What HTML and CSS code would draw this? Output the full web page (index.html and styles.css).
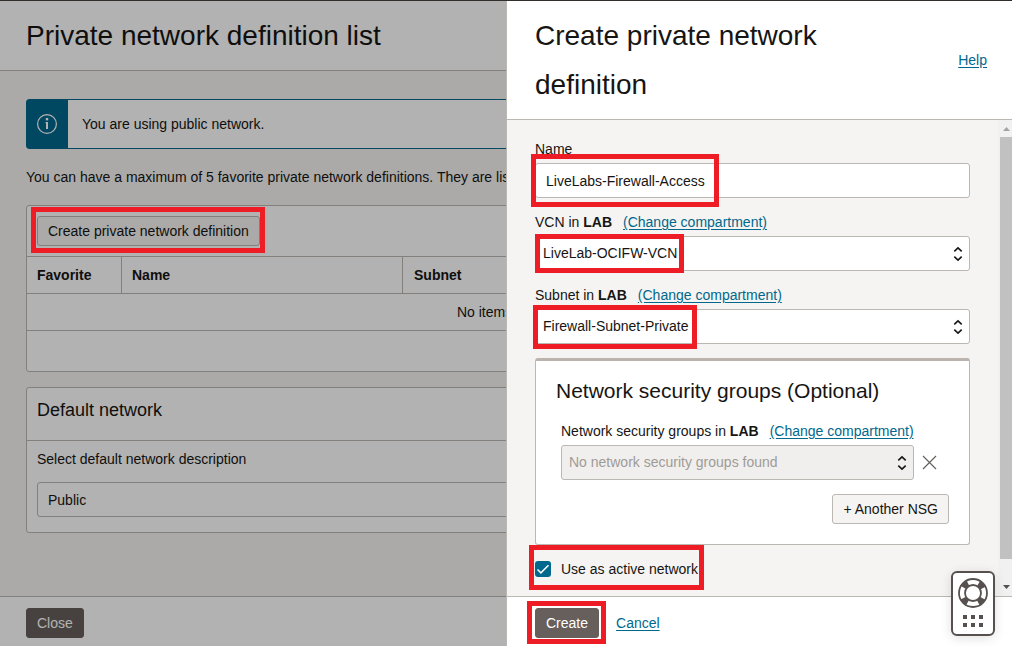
FILE: index.html
```html
<!DOCTYPE html>
<html lang="en">
<head>
<meta charset="utf-8">
<title>Private network definition list</title>
<link rel="stylesheet" href="styles.css">
</head>
<body>
<div class="app">
  <section class="pane page">
    <header class="pane-header"><h1 class="title">Private network definition list</h1></header>
    <main class="page-body">
      <div class="banner">
        <div class="banner-icon">
          <svg width="20" height="20" viewBox="0 0 20 20" fill="none" stroke="#fff"><circle cx="10" cy="10" r="9.4" stroke-width="1.200"/><path d="M10 8v7" stroke-width="2"/><path d="M10 4v2.400" stroke-width="2.400"/><path d="M8.500 8.500H10" stroke-width="1"/></svg>
        </div>
        <p class="banner-text">You are using public network.</p>
      </div>
      <p class="intro">You can have a maximum of 5 favorite private network definitions. They are listed below.</p>
      <section class="card definitions">
        <div class="toolbar">
          <span class="marked"><button class="btn" type="button">Create private network definition</button><span class="mark mark-definition"></span></span>
        </div>
        <table class="table">
          <thead><tr><th class="col-favorite">Favorite</th><th class="col-name">Name</th><th>Subnet</th></tr></thead>
          <tbody><tr><td colspan="3">No items found.</td></tr></tbody>
        </table>
        <div class="table-footer"></div>
      </section>
      <section class="card">
        <h2 class="card-title">Default network</h2>
        <div class="card-body">
          <label class="label" for="default-network">Select default network description</label>
          <input class="control" id="default-network" type="text" value="Public" readonly>
        </div>
      </section>
    </main>
    <footer class="pane-footer"><button class="btn btn-primary" type="button">Close</button></footer>
  </section>
  <div class="scrim"></div>

  <aside class="pane drawer">
    <header class="pane-header drawer-header">
      <h1 class="title">Create private network definition</h1>
      <a class="link" href="#help">Help</a>
    </header>
    <div class="drawer-main">
      <form class="form" id="create-form">
        <div class="field">
          <label class="label" for="name">Name</label>
          <div class="marked"><input class="control" id="name" type="text" value="LiveLabs-Firewall-Access"><span class="mark mark-name"></span></div>
        </div>
        <div class="field">
          <div class="label-row"><label class="label" for="vcn">VCN in <b>LAB</b></label><a class="link" href="#vcn">(Change compartment)</a></div>
          <div class="marked">
            <select class="control select" id="vcn"><option>LiveLab-OCIFW-VCN</option></select>
            <svg class="chevrons" width="10" height="16" viewBox="0 0 10 16"><path d="M1.300 5.300 5 1.800l3.700 3.500M1.300 10.700 5 14.200l3.700-3.500"/></svg>
            <span class="mark mark-vcn"></span>
          </div>
        </div>
        <div class="field">
          <div class="label-row"><label class="label" for="subnet">Subnet in <b>LAB</b></label><a class="link" href="#subnet">(Change compartment)</a></div>
          <div class="marked">
            <select class="control select" id="subnet"><option>Firewall-Subnet-Private</option></select>
            <svg class="chevrons" width="10" height="16" viewBox="0 0 10 16"><path d="M1.300 5.300 5 1.800l3.700 3.500M1.300 10.700 5 14.200l3.700-3.500"/></svg>
            <span class="mark mark-subnet"></span>
          </div>
        </div>
        <section class="groups">
          <h2 class="groups-title">Network security groups (Optional)</h2>
          <div class="field groups-field">
            <div class="label-row"><label class="label" for="nsg">Network security groups in <b>LAB</b></label><a class="link" href="#nsg">(Change compartment)</a></div>
            <div class="nsg-row">
              <div class="marked nsg-select">
                <select class="control select" id="nsg" disabled><option>No network security groups found</option></select>
                <svg class="chevrons" width="10" height="16" viewBox="0 0 10 16"><path d="M1.300 5.300 5 1.800l3.700 3.500M1.300 10.700 5 14.200l3.700-3.500"/></svg>
              </div>
              <button class="remove" type="button" aria-label="Remove"><svg width="15" height="15" viewBox="0 0 15 15"><path d="m1 1 13 13M14 1 1 14" stroke="#66615d" stroke-width="1.200"/></svg></button>
            </div>
          </div>
          <button class="btn add" type="button">+ Another NSG</button>
        </section>
        <label class="check marked"><input class="checkbox" type="checkbox" checked><svg class="tick" width="16" height="16" viewBox="0 0 16 16"><path d="m2.500 8.500 3.400 3.400L13.500 4.300" fill="none" stroke="#fff" stroke-width="1.500"/></svg>Use as active network<span class="mark mark-active"></span></label>
      </form>
      <div class="scrollbar" aria-hidden="true">
        <svg class="arrow" width="14" height="17" viewBox="0 0 14 17"><path d="M5 11h7L8.500 7z" fill="#a3a3a3"/></svg>
        <div class="thumb"></div>
        <div class="track"></div>
        <svg class="arrow" width="14" height="17" viewBox="0 0 14 17"><path d="M5 6h7l-3.500 4z" fill="#505050"/></svg>
      </div>
    </div>
    <footer class="pane-footer drawer-footer">
      <span class="marked"><button class="btn btn-primary" type="submit" form="create-form">Create</button><span class="mark mark-create"></span></span>
      <a class="link" href="#cancel">Cancel</a>
    </footer>
  </aside>

  <button class="help-widget" type="button" aria-label="Support">
    <svg width="30" height="50" viewBox="0 0 30 50">
      <g fill="none" stroke="#56514e"><circle cx="15" cy="15" r="14" stroke-width="1.800"/><circle cx="15" cy="15" r="8" stroke-width="1.800"/>
      <circle cx="15" cy="15" r="11" stroke-width="6" stroke-dasharray="6.200 11.079" stroke-dashoffset="-5.540"/></g>
      <path d="M5 37h4v4H5zM13 37h4v4h-4zM21 37h4v4h-4zM5 45h4v4H5zM13 45h4v4h-4zM21 45h4v4h-4z" fill="#56514e"/>
    </svg>
  </button>
</div>
</body>
</html>
```
FILE: styles.css
```css
* { box-sizing: border-box; }
body {
  margin: 0;
  color: #161513;
  font: 14px/20px "Liberation Sans", Arial, sans-serif;
}
h1, h2, p { margin: 0; font-weight: 400; }
button, input, select { font: inherit; color: inherit; }

.app { position: relative; height: 100vh; overflow: hidden; }
.pane { display: flex; flex-direction: column; height: 100%; border-top: 1px solid #312d2a; background: #f5f4f2; }
.pane-header { padding: 10px 25px 10px 26px; border-bottom: 1px solid #bbb7b3; background: #fff; }
.title { font-size: 28px; line-height: 49px; }
.pane-footer { display: flex; padding: 11px 26px 8px; border-top: 1px solid #bbb7b3; background: #fff; }
.scrim { position: absolute; inset: 1px 0 0; background: rgba(0, 0, 0, 0.3); }

.btn { display: block; height: 30px; padding: 0 10px; border: 1px solid #bbb7b3; border-radius: 3px; background: #f5f4f2; white-space: nowrap; }
.btn-primary { border-color: #665f5b; background: #665f5b; color: #fff; }
.link { color: #00688c; text-decoration: underline; text-underline-offset: 2px; }
.label { display: block; }
.control { display: block; width: 100%; height: 35px; padding: 0 10px; border: 1px solid #bbb7b3; border-radius: 3px; background: #fff; }

/* Red callout frames */
.marked { position: relative; }
.mark { position: absolute; z-index: 2; border: 5px solid #ee1c25; pointer-events: none; }
.mark-definition { inset: -9px -5px -7px -6px; }
.mark-name { top: -9px; left: -4px; width: 188px; height: 53px; }
.mark-vcn { top: -2px; left: 0; width: 149px; height: 39px; }
.mark-subnet { top: -4px; left: -2px; width: 164px; height: 44px; }
.mark-active { inset: -14px -6px -11px; }
.mark-create { inset: -7px -7px -6px -8px; }

/* Definition list */
.page-body { flex: 1; padding: 28px 26px 0; }
.banner { display: flex; height: 50px; border: 1px solid #00688c; border-radius: 3px; background: #fff; }
.banner-icon { display: grid; place-items: center; width: 41px; padding-right: 1px; background: #00688c; }
.banner-text { padding: 14px; }
.intro { padding: 18px 0; white-space: nowrap; }
.card { border: 1px solid #bbb7b3; border-radius: 3px; background: #fff; }
.definitions { margin-bottom: 15px; }
.toolbar { display: flex; padding: 10px; }
.table { width: 100%; border-spacing: 0; table-layout: fixed; }
.table th, .table td { height: 37px; padding: 0 11px; border-top: 1px solid #bbb7b3; }
.table th { text-align: left; border-right: 1px solid #bbb7b3; }
.table th:first-child, .table th:nth-child(2) { padding-left: 10px; }
.table th:last-child { border-right: 0; }
.table td { text-align: center; }
.col-favorite { width: 95px; }
.col-name { width: 281px; }
.table-footer { height: 41px; border-top: 1px solid #bbb7b3; }
.card-title { padding: 10px 10px 18px; border-bottom: 1px solid #bbb7b3; font-size: 18px; line-height: 24px; }
.card-body { display: grid; gap: 13px; padding: 8px 10px 15px; }

/* Create drawer */
.drawer { position: absolute; inset: 0 0 0 auto; width: 50%; z-index: 3; }
.drawer > * { border-left: 1px solid #bbb7b3; }
.drawer-header { display: flex; align-items: center; gap: 32px; padding-left: 28px; }
.drawer-header .title { flex: 1; }
.drawer-main { display: flex; flex: 1; min-height: 0; }
.form { flex: 1; display: flex; flex-direction: column; gap: 14px; padding: 19px 28px 0; }
.field { display: flex; flex-direction: column; gap: 4px; }
.label-row { display: flex; gap: 11px; }
.select { padding: 0 32px 1px 7px; appearance: none; }
.select:disabled { background: #f0efed; color: #a09b97; opacity: 1; }
.chevrons { position: absolute; top: 10px; right: 7px; fill: none; stroke: #161513; stroke-width: 1.6px; pointer-events: none; }
.groups { display: flex; flex-direction: column; padding: 15px 20px 20px; border: 1px solid #bbb7b3; border-top: 3px solid #bbb3ae; border-radius: 3px; background: #fff; }
.groups-title { font-size: 21px; line-height: 30px; }
.groups-field { padding: 15px 12px 14px 5px; }
.nsg-row { display: flex; align-items: center; gap: 8px; }
.nsg-select { flex: 1; }
.remove { display: flex; padding: 0; border: 0; background: none; }
.add { align-self: flex-end; }
.check { display: flex; align-items: center; align-self: flex-start; gap: 10px; }
.checkbox { width: 16px; height: 16px; margin: 0; appearance: none; border-radius: 3px; background: #00688c; }
.tick { position: absolute; left: 0; }
.drawer-footer { align-items: center; gap: 17px; padding-left: 28px; }

.scrollbar { display: flex; flex-direction: column; width: 14px; background: #f1f1f1; }
.arrow { flex: none; }
.thumb { flex: 422; margin-left: 2px; background: #c1c1c1; }
.track { flex: 20; }

.help-widget { position: absolute; right: 17px; bottom: 10px; z-index: 4; display: flex; justify-content: center; width: 44px; height: 65px; padding: 5px 0; border: 2px solid #56514e; border-radius: 6px; background: #fff; box-shadow: 0 2px 12px rgba(0, 0, 0, 0.12); }
```
